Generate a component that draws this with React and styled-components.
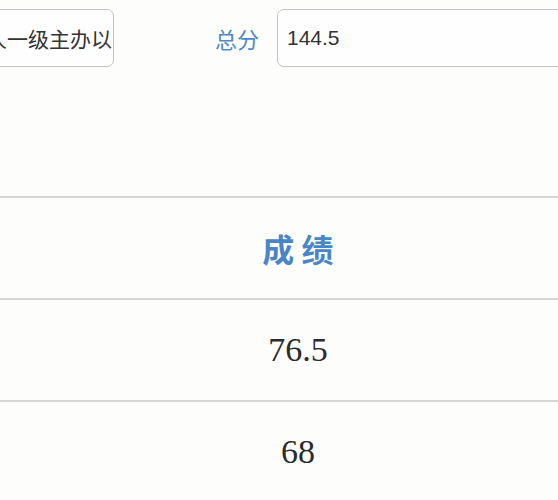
import React from "react";
import styled, { createGlobalStyle } from "styled-components";

const rows = ["76.5", "68"];

const App = () => {
	return (
		<>
			<GlobalStyle />
			<Page>
				<Fields>
					<Field>
						<FieldText>人一级主办以</FieldText>
					</Field>
					<LabelCell>总分</LabelCell>
					<Field $wide>
						<FieldText>144.5</FieldText>
					</Field>
				</Fields>
				<ScoreTable>
					<HeadCell>成 绩</HeadCell>
					{rows.map((score) => (
						<ScoreCell key={score}>{score}</ScoreCell>
					))}
				</ScoreTable>
			</Page>
		</>
	);
};

export default App;

const GlobalStyle = createGlobalStyle`
	html, body {
		margin: 0;
		padding: 0;
		background: #fdfdfc;
		font-family: "Liberation Sans", "Noto Sans CJK SC", sans-serif;
	}
`;

const Page = styled.div`
	width: 558px;
	height: 500px;
	overflow: hidden;
`;

const Fields = styled.div`
	display: flex;
	align-items: center;
	margin: 9px 0 0 -70px;
	height: 58px;
`;

const Field = styled.div`
	flex: none;
	box-sizing: border-box;
	width: ${(p) => (p.$wide ? "340px" : "184px")};
	height: 58px;
	display: flex;
	align-items: center;
	justify-content: ${(p) => (p.$wide ? "flex-start" : "flex-end")};
	padding: 0 ${(p) => (p.$wide ? "9px" : "1px")};
	border: 1.5px solid #c4c4c4;
	border-radius: 7px;
	background: #fefefe;
	overflow: hidden;
`;

const FieldText = styled.span`
	white-space: nowrap;
	font-size: 21px;
	color: #333;
	font-family: "Liberation Sans", "Noto Sans CJK SC", sans-serif;
`;

const LabelCell = styled.div`
	flex: none;
	box-sizing: border-box;
	width: 163px;
	padding-right: 18px;
	text-align: right;
	font-size: 22px;
	color: #4f89c6;
	font-family: "Noto Sans CJK SC", sans-serif;
`;

const ScoreTable = styled.div`
	margin-top: 129px;
	width: 596px;
	display: flex;
	flex-direction: column;
`;

const Cell = styled.div`
	box-sizing: border-box;
	height: 102px;
	border-top: 2px solid #d6d6d6;
	display: flex;
	align-items: center;
	justify-content: center;
`;

const HeadCell = styled(Cell)`
	font-family: "Noto Sans CJK SC", sans-serif;
	font-weight: 700;
	font-size: 32px;
	color: #4a86c6;
`;

const ScoreCell = styled(Cell)`
	font-family: "Liberation Serif", serif;
	font-size: 34px;
	color: #2b2b2b;
`;
